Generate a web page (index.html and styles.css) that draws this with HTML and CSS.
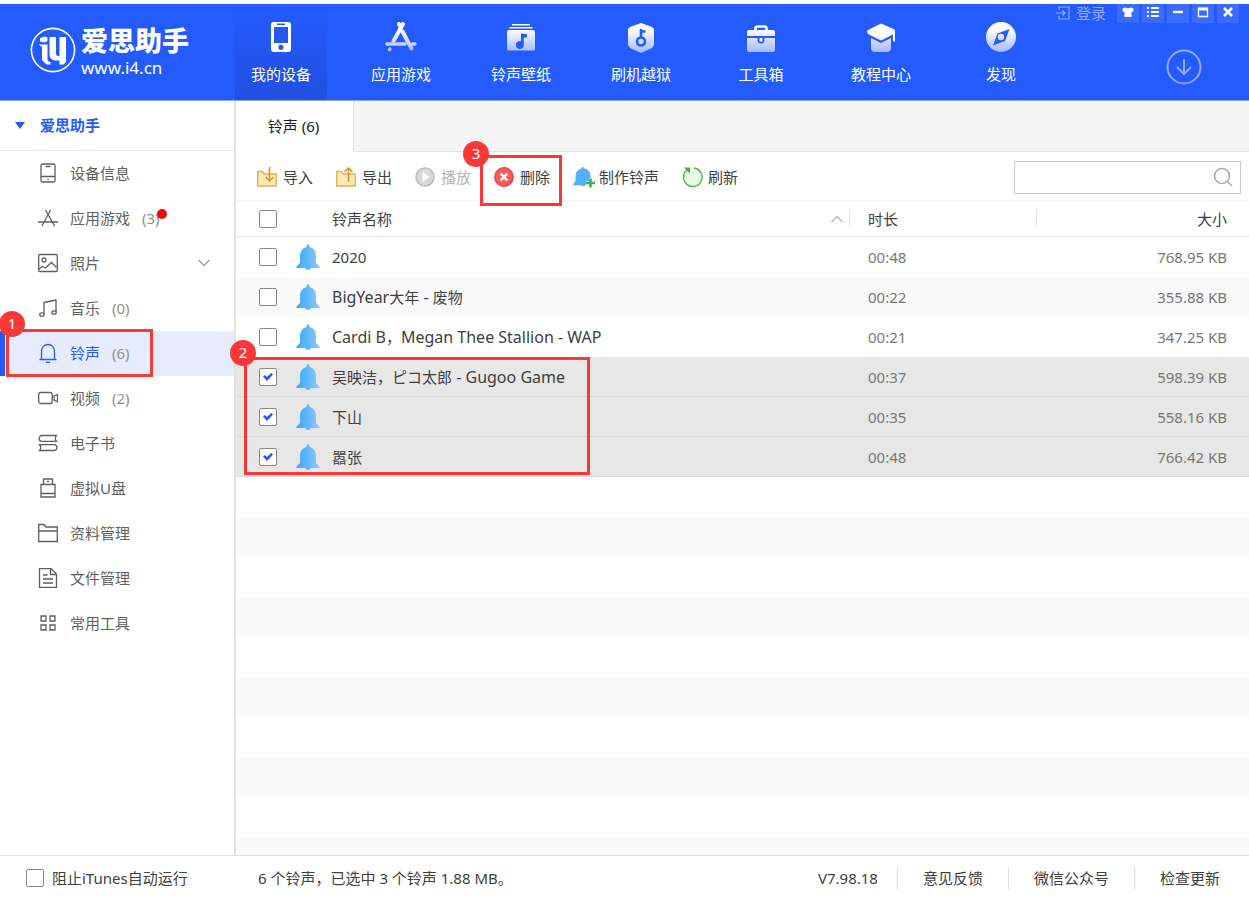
FILE: index.html
```html
<!DOCTYPE html>
<html lang="zh-CN">
<head>
<meta charset="utf-8">
<meta name="viewport" content="width=device-width, initial-scale=1">
<title>爱思助手</title>
<link rel="stylesheet" href="styles.css">
</head>
<body>
<div class="app">
  <header class="header">
    <div class="brand">
      <svg class="brand-mark" viewBox="0 0 46 46" aria-hidden="true">
        <circle cx="23" cy="23" r="21.6" fill="none" stroke="#fff" stroke-width="1.6"/>
        <path d="M10 11l5-1.500 2.500 1v3.500l-2.500 1.500-5-1z" fill="#fff"/>
        <path d="M8.500 17.500h9v15q0 2 3 2.500v2.500h-4l-4.500-4.500v-13z" fill="#fff"/>
        <path d="M19.500 10h6.500v16q0 3 2 3h1.500v-19h6.500v25l-2.500 2.500h-4v-4h-4.500q-5.500-1-5.500-6z" fill="#fff"/>
      </svg>
      <div class="brand-words">
        <strong class="brand-name">爱思助手</strong>
        <span class="brand-site">www.i4.cn</span>
      </div>
    </div>
    <nav class="nav">
      <button class="nav-item nav-active" type="button">
        <svg viewBox="0 0 32 32"><path fill="#fff" fill-rule="evenodd" d="M8 1h15q3 0 3 3v24q0 3-3 3H9q-3 0-3-3V4q0-3 2-3zM9 6v16h14V6zM12 2.500v1.600h8V2.500zM16 23.700a2.600 2.600 0 1 0 0 5.200a2.600 2.600 0 0 0 0-5.200z"/></svg>
        <span>我的设备</span>
      </button>
      <button class="nav-item" type="button">
        <svg viewBox="0 0 32 32">
          <defs><linearGradient id="fade" gradientUnits="userSpaceOnUse" x1="0" y1="8" x2="0" y2="31"><stop offset="0" stop-color="#fff"/><stop offset="1" stop-color="#a4baff"/></linearGradient></defs>
          <g fill="none" stroke="url(#fade)" stroke-width="4" stroke-linecap="round"><path d="M18 3l-9.500 17M14 3l1.500 2.500M17.500 10.500l9 17"/><path d="M2 23h18M27.500 23h2.500M5 28l-.5.6" stroke-width="3.400"/></g>
        </svg>
        <span>应用游戏</span>
      </button>
      <button class="nav-item" type="button">
        <svg viewBox="0 0 32 32"><path fill="url(#fade)" fill-rule="evenodd" d="M7 3h18v1.500H7zM4.500 6h23v1.500h-23zM2 11q0-2 2-2h24q2 0 2 2v17q0 1.500-1.500 1.500h-25Q2 29.500 2 28zM16 12.500v7.700a4 4 0 1 0 2.800 3.800v-7.500h3.200v-3.200z"/></svg>
        <span>铃声壁纸</span>
      </button>
      <button class="nav-item" type="button">
        <svg viewBox="0 0 32 32"><path fill="url(#fade)" d="M16 2l11 4 2 2v16l-2 3-11 5-11-5-2-3V8l2-2z"/><circle cx="16" cy="20.500" r="4" fill="none" stroke="#245bff" stroke-width="2.600"/><path d="M16 17V8M16 10.500h4.500" fill="none" stroke="#245bff" stroke-width="2.600"/></svg>
        <span>刷机越狱</span>
      </button>
      <button class="nav-item" type="button">
        <svg viewBox="0 0 32 32"><path d="M10.500 9V7.500q0-2 2-2h7q2 0 2 2V9" fill="none" stroke="#fff" stroke-width="2.600"/><path fill="url(#fade)" d="M4 9h24q2 0 2 2v4H2v-4q0-2 2-2zM2 17h10.500v2q0 3.500 3.500 3.500t3.500-3.500v-2H30v12q0 2-2 2H4q-2 0-2-2z"/><rect x="14.500" y="17" width="3" height="3.500" fill="#fff"/></svg>
        <span>工具箱</span>
      </button>
      <button class="nav-item" type="button">
        <svg viewBox="0 0 32 32"><path fill="#fff" d="M16 2.500l12.500 5.500q1.500.7 1.500 2v11l-2-1v-6.500L16 19.500 3 13Q1 10.500 3 9z"/><path fill="url(#fade)" d="M6 17l10 5 10-5v10q0 4-4 4H10q-4 0-4-4z"/></svg>
        <span>教程中心</span>
      </button>
      <button class="nav-item" type="button">
        <svg viewBox="0 0 32 32"><circle cx="16" cy="16" r="15" fill="url(#fade)"/><path fill="#245bff" fill-rule="evenodd" d="M24.500 8l-4.500 12-12 4.500 4.500-12zM16 12.800a3.200 3.200 0 1 0 0 6.400a3.200 3.200 0 0 0 0-6.400z"/></svg>
        <span>发现</span>
      </button>
    </nav>
    <div class="header-side">
      <div class="window-bar">
        <button class="login" type="button">
          <svg viewBox="0 0 14 14"><path d="M3 4V1h10v12H3v-3M0 7h9M6.500 4.500L9 7 6.500 9.500" fill="none" stroke="currentColor" stroke-width="1.200"/></svg>
          <span>登录</span>
        </button>
        <button class="win-btn" type="button" aria-label="皮肤"><svg viewBox="0 0 14 14"><path fill="#fff" d="M4.500 2.500q2.500 1.700 5 0l3 1L12 7h-1.500v5h-7V7H2l-.5-3.500z"/></svg></button>
        <button class="win-btn" type="button" aria-label="菜单"><svg viewBox="0 0 14 14"><path d="M1 3h2M5 3h8M1 7h2M5 7h8M1 11h2M5 11h8" stroke="#fff" stroke-width="2"/></svg></button>
        <button class="win-btn" type="button" aria-label="最小化"><svg viewBox="0 0 14 14"><path d="M2 7h10" stroke="#fff" stroke-width="2.400"/></svg></button>
        <button class="win-btn" type="button" aria-label="最大化"><svg viewBox="0 0 14 14"><path d="M2.500 11.500v-8h9v8z" fill="none" stroke="#fff" stroke-width="1.300"/><path d="M2 4h10" stroke="#fff" stroke-width="3"/></svg></button>
        <button class="win-btn" type="button" aria-label="关闭"><svg viewBox="0 0 14 14"><path d="M3 3l8 8M11 3l-8 8" stroke="#fff" stroke-width="2.600"/></svg></button>
      </div>
      <button class="download" type="button" aria-label="下载"><svg viewBox="0 0 36 36"><circle cx="18" cy="18" r="16.500"/><path d="M18 10v14.500M11 18l7 7 7-7"/></svg></button>
    </div>
  </header>

  <div class="body">
    <aside class="sidebar">
      <button class="side-title" type="button"><span class="triangle"></span>爱思助手</button>
      <ul class="side-list">
        <li><a class="side-item" href="#info"><svg viewBox="0 0 20 20"><rect x="3" y="1" width="14" height="18" rx="1.500"/><path d="M3 13.500h14M7.500 3.500h5M10 15.500v1.500"/></svg>设备信息</a></li>
        <li><a class="side-item" href="#apps"><svg viewBox="0 0 20 20"><path d="M12.500 2L4 18M7.500 2l9 16M0 14h20"/></svg>应用游戏<span class="count">(3)<i class="dot"></i></span></a></li>
        <li><a class="side-item" href="#photos"><svg viewBox="0 0 20 20"><rect x="0.700" y="1.500" width="18.600" height="17" rx="1"/><circle cx="6" cy="7" r="2"/><path d="M1 16l3.500-2.500 3 1.500 6-5.500 5 5"/></svg>照片<svg class="chevron" viewBox="0 0 12 8"><path d="M0.500 1l5.500 5.500L11.500 1"/></svg></a></li>
        <li><a class="side-item" href="#music"><svg viewBox="0 0 20 20"><path d="M6 16V4.500L18 2v12M6 4.500L18 2"/><ellipse cx="4" cy="16.500" rx="2.200" ry="1.700"/><ellipse cx="16" cy="14.500" rx="2.200" ry="1.700"/></svg>音乐<span class="count">(0)</span></a></li>
        <li class="marked"><a class="side-item side-active" href="#ringtones"><svg viewBox="0 0 20 20"><path d="M1.500 16.500h17M3.500 16.500V8a6.500 6.500 0 0 1 13 0v8.500M8 18.700q2 1.600 4 0"/></svg>铃声<span class="count">(6)</span></a>
          <div class="mark mark-side"><b class="mark-num">1</b></div></li>
        <li><a class="side-item" href="#video"><svg viewBox="0 0 20 20"><rect x="0.700" y="4.500" width="13.500" height="11" rx="2"/><path d="M16 8l3.500-1.500v7L16 12z"/></svg>视频<span class="count">(2)</span></a></li>
        <li><a class="side-item" href="#books"><svg viewBox="0 0 20 20"><path d="M18.500 2.500H4a2.900 2.900 0 0 0 0 5.800h14.500L17.500 7V4zM1.500 11.700H16a2.900 2.900 0 0 1 0 5.800H1.500L2.500 16v-3z"/></svg>电子书</a></li>
        <li><a class="side-item" href="#udisk"><svg viewBox="0 0 20 20"><path d="M5.500 6V1h9v5M9 3.500h2M3 6.500h14V19H3zM3 15.500h14"/></svg>虚拟U盘</a></li>
        <li><a class="side-item" href="#data"><svg viewBox="0 0 20 20"><path d="M0.700 18.500v-17H6l2 2.500h11.300v14.500zM1 8h18"/></svg>资料管理</a></li>
        <li><a class="side-item" href="#files"><svg viewBox="0 0 20 20"><path d="M1.500 0.700h11.500l5.500 5.300v13.300h-17zM12.500 1v5.500h6M5 7h4.500M5 11h10M5 15h10"/></svg>文件管理</a></li>
        <li><a class="side-item" href="#tools"><svg viewBox="0 0 20 20"><path d="M3 3h5v5H3zM12 3h5v5h-5zM3 12h5v5H3zM12 12h5v5h-5z"/></svg>常用工具</a></li>
      </ul>
    </aside>

    <main class="main">
      <div class="tabs"><button class="tab" type="button">铃声 (6)</button></div>
      <div class="toolbar">
        <button class="tool" type="button"><svg viewBox="0 0 20 20"><path d="M.7 4.500h4.500l2 2.500h12v12H.7z" fill="#ffe9b8" stroke="#e3b04b" stroke-width="1.300"/><path d="M12.500 0v14M8.500 10l4 4 4-4" fill="none" stroke="#d99a1d" stroke-width="1.600"/></svg>导入</button>
        <button class="tool" type="button"><svg viewBox="0 0 20 20"><path d="M.7 4.500h4.500l2 2.500h12v12H.7z" fill="#ffe9b8" stroke="#e3b04b" stroke-width="1.300"/><path d="M12.500 15V1M8.500 5l4-4 4 4" fill="none" stroke="#d99a1d" stroke-width="1.600"/></svg>导出</button>
        <button class="tool" type="button" disabled><svg viewBox="0 0 20 20"><circle cx="10" cy="10" r="9" fill="#d9d9d9" stroke="#bdbdbd" stroke-width="1.600"/><path d="M7.500 5l7 5-7 5z" fill="#fff"/></svg>播放</button>
        <div class="marked">
          <button class="tool" type="button"><svg viewBox="0 0 20 20"><circle cx="10" cy="10" r="9.300" fill="#f95a5a" stroke="#d94444" stroke-width="1.200"/><path d="M6.700 6.700l6.600 6.600M13.300 6.700l-6.600 6.600" stroke="#fff" stroke-width="2.400"/></svg>删除</button>
          <div class="mark mark-tool"><b class="mark-num">3</b></div>
        </div>
        <button class="tool tool-make" type="button"><svg viewBox="0 0 22 20"><path d="M10 0q1.500 0 1.500 1.500 6 1.500 6 7.500v5l2.500 3.500v.8h-8q-2 2-4 0H0v-.8L2.500 14V9q0-6 6-7.500Q8.500 0 10 0z" fill="#53aeff"/><path d="M18 11v10M13 16h10" stroke="#fff" stroke-width="4"/><path d="M17.500 11.500v9M13 16h9" stroke="#3bb54a" stroke-width="2.600"/></svg>制作铃声</button>
        <button class="tool" type="button"><svg viewBox="0 0 20 20"><path d="M6.500 2A9.300 9.300 0 1 0 12 1" fill="#e6fae6" stroke="#4db453" stroke-width="1.400"/><path d="M2 .5h6v6z" fill="#3caf43"/></svg>刷新</button>
        <label class="search"><input type="search" aria-label="搜索"><svg viewBox="0 0 20 20"><circle cx="9" cy="9" r="7.500"/><path d="M14.500 14.500l4.500 4.500"/></svg></label>
      </div>
      <div class="list marked">
        <table class="table">
          <colgroup><col class="col-check"><col><col class="col-time"><col class="col-size"></colgroup>
          <thead><tr>
            <th class="check"><input class="box" type="checkbox" aria-label="全选"></th>
            <th class="name">铃声名称<svg class="sort" viewBox="0 0 12 8"><path d="M0.500 7L6 1.500 11.500 7"/></svg></th>
            <th class="time">时长</th>
            <th class="size">大小</th>
          </tr></thead>
          <tbody>
            <tr><td class="check"><input class="box" type="checkbox" aria-label="2020"></td><td class="name"><div class="tone"><svg class="bell" viewBox="0 0 24 26"><defs><linearGradient id="bell"><stop offset="0" stop-color="#3ba9ff"/><stop offset="1" stop-color="#8cc8ff"/></linearGradient><symbol id="bell-shape" viewBox="0 0 24 26"><path fill="url(#bell)" d="M12 0q1.500 0 1.700 3Q20 5 20 12v7l3.500 3.500V24H15q-.5 2-3 2t-3-2H.5v-1.500L4 19v-7q0-7 6.300-9Q10.500 0 12 0z"/></symbol></defs><use href="#bell-shape"/></svg><span>2020</span></div></td><td class="time">00:48</td><td class="size">768.95 KB</td></tr>
            <tr><td class="check"><input class="box" type="checkbox" aria-label="BigYear大年 - 废物"></td><td class="name"><div class="tone"><svg class="bell" viewBox="0 0 24 26"><use href="#bell-shape"/></svg><span><span class="latin">BigYear</span>大年<span class="latin"> - </span>废物</span></div></td><td class="time">00:22</td><td class="size">355.88 KB</td></tr>
            <tr><td class="check"><input class="box" type="checkbox" aria-label="Cardi B，Megan Thee Stallion - WAP"></td><td class="name"><div class="tone"><svg class="bell" viewBox="0 0 24 26"><use href="#bell-shape"/></svg><span><span class="latin">Cardi B</span>，<span class="latin">Megan Thee Stallion - WAP</span></span></div></td><td class="time">00:21</td><td class="size">347.25 KB</td></tr>
            <tr class="selected"><td class="check"><input class="box" type="checkbox" checked aria-label="吴映洁，ピコ太郎 - Gugoo Game"></td><td class="name"><div class="tone"><svg class="bell" viewBox="0 0 24 26"><use href="#bell-shape"/></svg><span>吴映洁，ピコ太郎<span class="latin"> - Gugoo Game</span></span></div></td><td class="time">00:37</td><td class="size">598.39 KB</td></tr>
            <tr class="selected"><td class="check"><input class="box" type="checkbox" checked aria-label="下山"></td><td class="name"><div class="tone"><svg class="bell" viewBox="0 0 24 26"><use href="#bell-shape"/></svg><span>下山</span></div></td><td class="time">00:35</td><td class="size">558.16 KB</td></tr>
            <tr class="selected"><td class="check"><input class="box" type="checkbox" checked aria-label="嚣张"></td><td class="name"><div class="tone"><svg class="bell" viewBox="0 0 24 26"><use href="#bell-shape"/></svg><span>嚣张</span></div></td><td class="time">00:48</td><td class="size">766.42 KB</td></tr>
          </tbody>
        </table>
        <div class="mark mark-rows"><b class="mark-num">2</b></div>
      </div>
    </main>
  </div>

  <footer class="footer">
    <label class="block-itunes"><input class="box" type="checkbox">阻止iTunes自动运行</label>
    <span class="status">6 个铃声，已选中 3 个铃声 1.88 MB。</span>
    <span class="version">V7.98.18</span>
    <a class="foot-link" href="#feedback">意见反馈</a>
    <a class="foot-link" href="#wechat">微信公众号</a>
    <a class="foot-link" href="#update">检查更新</a>
  </footer>
</div>
</body>
</html>
```

FILE: styles.css
```css
* { box-sizing: border-box; }

body {
  margin: 0;
  font: 15px/22px "Noto Sans", "Noto Sans CJK SC", sans-serif;
  color: #404040;
  background: #fff;
}

button {
  margin: 0;
  padding: 0;
  border: 0;
  background: none;
  font: inherit;
  color: inherit;
}

a { color: inherit; text-decoration: none; }
svg { display: block; flex: none; }

.app {
  display: flex;
  flex-direction: column;
  min-height: 100vh;
  padding-top: 4px;
}

/* Header */
.header {
  display: flex;
  height: 97px;
  background: #245bff;
  border-bottom: 1px solid #8ca6ff;
}
.brand {
  display: flex;
  align-items: flex-start;
  gap: 5px;
  width: 235px;
  padding: 23px 0 0 30px;
  color: #fff;
}
.brand-mark { width: 46px; height: 46px; }
.brand-words { display: flex; flex-direction: column; }
.brand-name {
  font: 900 27px/30px "Liberation Sans", "Noto Sans CJK SC", sans-serif;
}
.brand-site { font-size: 17px; line-height: 22px; }

.nav { display: flex; gap: 28px; }
.nav-item {
  display: flex;
  flex-direction: column;
  align-items: center;
  gap: 10px;
  width: 92px;
  padding-top: 17px;
  color: #fff;
}
.nav-item svg { width: 32px; height: 32px; }
.nav-active { background: linear-gradient(#245bff, #2150e0); }

.header-side {
  display: flex;
  flex-direction: column;
  align-items: flex-end;
  gap: 26px;
  margin-left: auto;
  padding-right: 10px;
}
.window-bar { display: flex; gap: 3px; }
.login {
  display: flex;
  align-items: center;
  gap: 6px;
  height: 17px;
  margin-right: 8px;
  color: #91acff;
}
.login svg { width: 14px; height: 14px; }
.win-btn {
  display: flex;
  align-items: center;
  justify-content: center;
  width: 22px;
  height: 19px;
  padding-bottom: 3px;
  background: #3a6cff;
}
.win-btn svg { width: 14px; height: 14px; }
.download { margin-right: 37px; }
.download svg {
  width: 36px;
  height: 36px;
  fill: none;
  stroke: #91acff;
  stroke-width: 2;
}

.body { display: flex; flex: 1; }

/* Sidebar */
.sidebar { width: 236px; border-right: 2px solid #e2e2e2; }
.side-title {
  display: flex;
  align-items: center;
  gap: 15px;
  width: 100%;
  height: 50px;
  padding: 0 0 1px 15px;
  border-bottom: 1px solid #e6e6e6;
  color: #245bff;
  font-weight: bold;
}
.triangle {
  border: 5px solid transparent;
  border-top: 7px solid #245bff;
  border-bottom: 0;
}
.side-list { margin: 0; padding: 0; list-style: none; }
.side-item {
  display: flex;
  align-items: center;
  gap: 12px;
  height: 45px;
  padding: 0 24px 2px 38px;
  color: #5f5f5f;
}
.side-item svg {
  width: 20px;
  height: 20px;
  fill: none;
  stroke: currentColor;
  stroke-width: 1.3;
}
.side-item .chevron { width: 12px; height: 8px; margin-left: auto; color: #999; }
.side-active {
  color: #245bff;
  background: #e6ebff;
  box-shadow: inset 5px 0 #245bff;
}
.count { position: relative; color: #8f8f8f; }
.dot {
  position: absolute;
  top: 2px;
  right: -7px;
  width: 10px;
  height: 10px;
  border-radius: 50%;
  background: #f00;
}

/* Callout frames with a numbered badge */
.marked { position: relative; }
.mark {
  position: absolute;
  z-index: 1;
  border: 3px solid #fb3838;
  pointer-events: none;
}
.mark-num {
  position: absolute;
  width: 26px;
  height: 26px;
  border-radius: 50%;
  background: #fb3838;
  color: #fff;
  font-weight: normal;
  line-height: 24px;
  text-align: center;
}
.mark-side { top: -2px; left: 6px; width: 147px; height: 48px; }
.mark-side .mark-num { top: -21px; left: -10px; }
.mark-tool { top: -7px; left: -14px; width: 82px; height: 51px; }
.mark-tool .mark-num { top: -17px; left: -20px; }
.mark-rows { top: 156px; left: 8px; width: 346px; height: 118px; }
.mark-rows .mark-num { top: -20px; left: -17px; }

/* Main */
.main { display: flex; flex-direction: column; flex: 1; min-width: 0; }
.tabs { display: flex; height: 51px; background: #fff; }
.tabs::after {
  content: "";
  flex: 1;
  background: #f5f5f5;
  border: solid #e3e3e3;
  border-width: 0 0 1px 1px;
}
.tab { width: 117px; padding: 0 2px 2px 0; color: #222; }
.toolbar {
  display: flex;
  align-items: center;
  gap: 23px;
  height: 49px;
  padding: 2px 8px 0 21px;
  border-bottom: 1px solid #f4f4f4;
}
.tool { display: flex; align-items: center; gap: 6px; height: 30px; }
.tool svg { width: 20px; height: 20px; overflow: visible; }
.tool-make { gap: 4px; }
.tool-make svg { width: 22px; }
.tool:disabled { color: #b5b5b5; }
.search {
  display: flex;
  align-items: center;
  width: 227px;
  height: 33px;
  margin-left: auto;
  padding: 0 7px;
  border: 1px solid #ccc;
}
.search input {
  flex: 1;
  min-width: 0;
  border: 0;
  outline: 0;
  font: inherit;
}
.search svg {
  width: 20px;
  height: 20px;
  fill: none;
  stroke: #aaa;
  stroke-width: 1.6;
}

/* Ringtone table; stripes continue below the last row */
.list {
  flex: 1;
  background: repeating-linear-gradient(#fff 0 40px, #f9f9f9 40px 80px) 0 36px;
}
.table {
  width: 100%;
  table-layout: fixed;
  border-spacing: 0;
}
.col-check { width: 52px; }
.col-time { width: 187px; }
.col-size { width: 213px; }
.table th {
  height: 36px;
  padding: 0;
  background: #fff;
  border-bottom: 1px solid #e6e6e6;
  font-weight: normal;
  text-align: left;
}
.table td { height: 40px; padding: 0; }
.table .check { padding-left: 23px; }
.table .time { padding-left: 19px; }
.table .size { padding-right: 22px; text-align: right; }
td.time, td.size { color: #777; }
.table th.name { padding-left: 44px; }
.table th.time, .table th.size {
  background: linear-gradient(#e3e3e3, #e3e3e3) 0 8px / 1px 18px no-repeat #fff;
}
.table td.name { padding-left: 8px; }
.tone { display: flex; align-items: center; gap: 12px; }
.bell { width: 24px; height: 26px; }
.latin { font-size: 16px; white-space: pre; }
.sort {
  float: right;
  width: 12px;
  height: 8px;
  margin: 7px 6px 0 0;
  fill: none;
  stroke: #777;
}
.selected td { background: #e7e7e7; box-shadow: inset 0 -1px #dadada; }

.box {
  display: grid;
  place-items: center;
  appearance: none;
  width: 18px;
  height: 18px;
  margin: 0;
  border: 1px solid #888;
  border-radius: 2px;
  background: #fff;
}
.box:checked::before {
  content: "";
  width: 10px;
  height: 8px;
  background: #245bff;
  clip-path: polygon(0 45%, 18% 25%, 38% 50%, 82% 0, 100% 20%, 40% 100%);
}

/* Footer */
.footer {
  display: flex;
  align-items: center;
  height: 44px;
  padding: 0 4px 0 26px;
  border-top: 1px solid #e0e0e0;
}
.block-itunes {
  display: flex;
  align-items: center;
  gap: 8px;
  width: 232px;
}
.version { margin-left: auto; padding-right: 19px; }
.foot-link {
  padding: 0 25px;
  border-left: 1px solid #ddd;
}
```
